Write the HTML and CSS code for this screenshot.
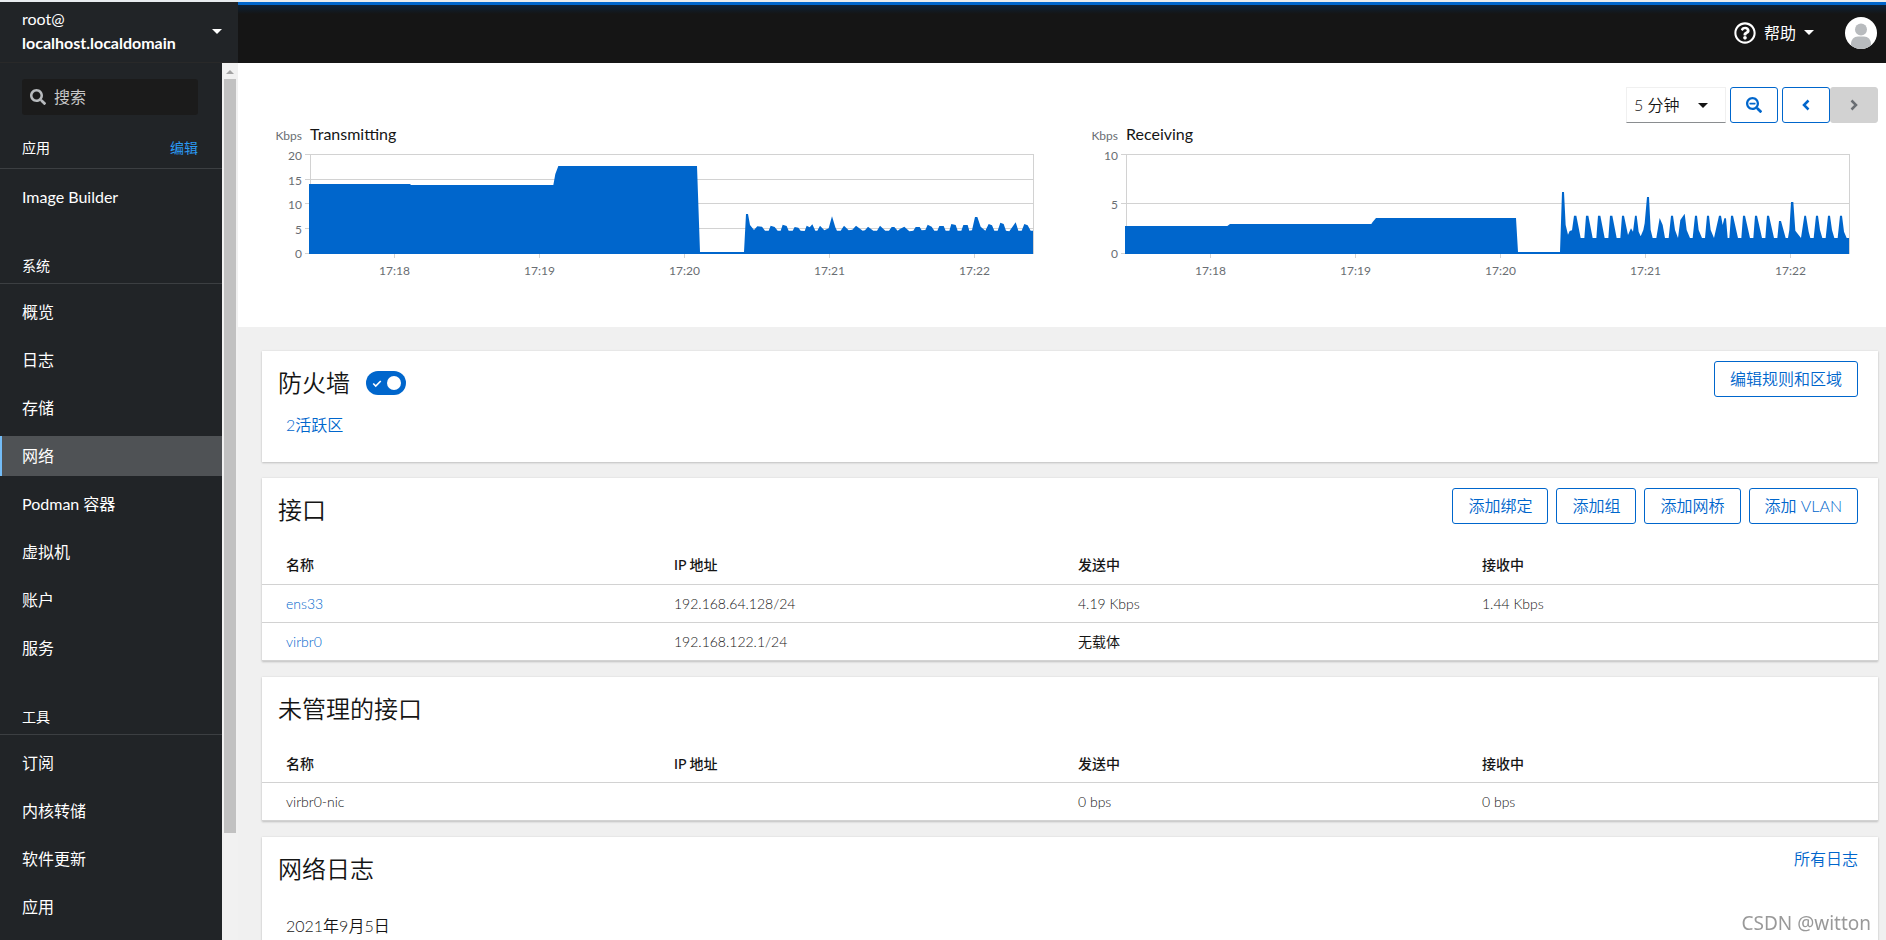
FILE: index.html
```html
<!DOCTYPE html>
<html lang="zh-CN">
<head>
<meta charset="utf-8">
<title>网络 - localhost.localdomain</title>
<link rel="stylesheet" href="styles.css">
</head>
<body>
<div class="shell">
  <button class="host" type="button">
    <span class="host-text"><span>root@</span><strong>localhost.localdomain</strong></span>
    <svg class="caret" viewBox="0 0 10 5" aria-hidden="true"><path d="M0 0h10L5 5z"/></svg>
  </button>
  <header class="topbar">
    <button class="help" type="button">
      <svg class="help-icon" viewBox="0 0 512 512" aria-hidden="true"><path d="M256 8C119 8 8 119 8 256c0 137 111 248 248 248s248-111 248-248C504 119 393 8 256 8zm0 448c-110.500 0-200-89.400-200-200 0-110.500 89.500-200 200-200 110.500 0 200 89.500 200 200 0 110.500-89.400 200-200 200zm107.200-255.200c0 67.100-72.400 68.100-72.400 92.900V300c0 6.600-5.400 12-12 12h-45.600c-6.600 0-12-5.400-12-12v-8.700c0-35.700 27.100-50 47.600-61.500 17.600-9.800 28.300-16.500 28.300-29.500 0-17.200-22-28.700-39.800-28.700-23.200 0-33.900 11-48.900 30-4.100 5.100-11.500 6.100-16.700 2.100l-27.800-21.100c-5.100-3.900-6.300-11.100-2.600-16.400C184.800 131.500 214.900 112 261.800 112c49 0 101.400 38.300 101.400 88.800zM298 368c0 23.200-18.800 42-42 42s-42-18.800-42-42 18.800-42 42-42 42 18.800 42 42z"/></svg>
      <span>帮助</span>
      <svg class="caret" viewBox="0 0 10 5" aria-hidden="true"><path d="M0 0h10L5 5z"/></svg>
    </button>
    <svg class="avatar" viewBox="0 0 32 32" role="img" aria-label="用户"><defs><clipPath id="round"><circle cx="16" cy="16" r="16"/></clipPath></defs><circle cx="16" cy="16" r="16" fill="#fff"/><g fill="#b8bbbe" clip-path="url(#round)"><circle cx="16" cy="12.500" r="6"/><path d="M6 32v-5c0-4.500 3-7.500 7-7.500h6c4 0 7 3 7 7.500v5z"/></g></svg>
  </header>

  <aside class="side">
    <nav class="nav">
      <div class="search">
        <svg viewBox="0 0 512 512" aria-hidden="true"><path d="M505 442.700L405.300 343c-4.500-4.500-10.600-7-17-7H372c27.600-35.300 44-79.700 44-128C416 93.100 322.900 0 208 0S0 93.100 0 208s93.100 208 208 208c48.300 0 92.700-16.400 128-44v16.300c0 6.400 2.500 12.500 7 17l99.700 99.700c9.400 9.400 24.600 9.400 33.900 0l28.300-28.300c9.400-9.400 9.400-24.600.1-34zM208 336c-70.700 0-128-57.200-128-128 0-70.700 57.200-128 128-128 70.700 0 128 57.200 128 128 0 70.700-57.200 128-128 128z"/></svg>
        <input type="search" placeholder="搜索" aria-label="搜索">
      </div>
      <div class="group-head first"><h2>应用</h2><a href="#">编辑</a></div>
      <ul><li><a href="#">Image Builder</a></li></ul>
      <div class="group-head"><h2>系统</h2></div>
      <ul>
        <li><a href="#">概览</a></li>
        <li><a href="#">日志</a></li>
        <li><a href="#">存储</a></li>
        <li><a href="#" class="current" aria-current="page">网络</a></li>
        <li><a href="#">Podman 容器</a></li>
        <li><a href="#">虚拟机</a></li>
        <li><a href="#">账户</a></li>
        <li><a href="#">服务</a></li>
      </ul>
      <div class="group-head"><h2>工具</h2></div>
      <ul>
        <li><a href="#">订阅</a></li>
        <li><a href="#">内核转储</a></li>
        <li><a href="#">软件更新</a></li>
        <li><a href="#">应用</a></li>
      </ul>
    </nav>
    <div class="track" aria-hidden="true"><svg viewBox="0 0 8 4"><path d="M0 4h8L4 0z"/></svg><div class="thumb"></div></div>
  </aside>

  <main class="main">
    <section class="graphs">
      <div class="tools">
        <div class="range">
          <select aria-label="时间范围"><option>5 分钟</option></select>
          <svg class="caret" viewBox="0 0 10 5" aria-hidden="true"><path d="M0 0h10L5 5z"/></svg>
        </div>
        <button class="icon-btn" type="button" aria-label="缩小"><svg viewBox="0 0 512 512" aria-hidden="true"><path d="M304 192v32c0 6.600-5.400 12-12 12H124c-6.600 0-12-5.400-12-12v-32c0-6.600 5.400-12 12-12h168c6.600 0 12 5.400 12 12zm201 284.700L476.700 505c-9.400 9.400-24.600 9.400-33.900 0L343 405.300c-4.500-4.500-7-10.600-7-17V372c-35.300 27.600-79.700 44-128 44C93.100 416 0 322.900 0 208S93.100 0 208 0s208 93.100 208 208c0 48.300-16.400 92.700-44 128h16.300c6.400 0 12.500 2.500 17 7l99.700 99.700c9.300 9.400 9.300 24.600 0 34zM344 208c0-75.200-60.800-136-136-136S72 132.800 72 208s60.800 136 136 136 136-60.800 136-136z"/></svg></button>
        <div class="pair">
          <button class="icon-btn" type="button" aria-label="向前"><svg viewBox="0 0 16 16" aria-hidden="true"><path class="stroke" d="M10.500 3.500 6 8l4.500 4.500"/></svg></button><button class="icon-btn" type="button" aria-label="向后" disabled><svg viewBox="0 0 16 16" aria-hidden="true"><path class="stroke" d="M5.500 3.500 10 8l-4.500 4.500"/></svg></button>
        </div>
      </div>
      <div class="charts">
        <figure class="chart">
          <figcaption><span class="unit">Kbps</span><h3>Transmitting</h3></figcaption>
          <div class="plot">
            <div class="ylabels"><span>20</span><span>15</span><span>10</span><span>5</span><span>0</span></div>
            <svg class="canvas" viewBox="0 0 2172 300" preserveAspectRatio="none" role="img" aria-label="Transmitting">
              <path class="grid" d="M-15 1.500H2169V300M-15 76.500H2169M-15 148.500H2169M-15 223.500H2169M-15 298.500H0M1.500 1.500V300"/>
              <polygon class="area" points="-3,300 -3,90 300,90 303,93 730,93 736,60 745,36 1161,36 1170,294 1302,294 1308,180 1314,180 1320,213 1332,228 1342,217 1356,218 1365,230 1376,230 1382,215 1394,219 1403,230 1412,230 1418,212 1430,216 1436,230 1448,230 1454,219 1465,221 1472,230 1484,231 1490,215 1499,220 1507,211 1516,230 1522,230 1530,215 1543,229 1556,223 1566,187 1576,220 1581,230 1592,230 1602,215 1616,229 1627,227 1638,215 1658,230 1665,229 1674,218 1690,230 1701,230 1710,215 1726,230 1737,230 1745,219 1753,219 1763,230 1771,224 1783,218 1798,232 1810,230 1817,219 1829,219 1835,229 1846,228 1853,212 1865,218 1873,230 1882,230 1888,216 1901,216 1907,230 1918,230 1924,210 1937,213 1943,230 1954,230 1960,213 1973,213 1978,230 1986,229 1995,189 2002,189 2012,218 2026,230 2036,210 2046,214 2053,230 2063,230 2071,206 2081,210 2088,230 2098,232 2117,205 2125,230 2135,230 2143,210 2153,214 2162,230 2169,230 2169,300"/>
            </svg>
          </div>
          <div class="xlabels"><span>17:18</span><span>17:19</span><span>17:20</span><span>17:21</span><span>17:22</span></div>
        </figure>
        <figure class="chart">
          <figcaption><span class="unit">Kbps</span><h3>Receiving</h3></figcaption>
          <div class="plot">
            <div class="ylabels"><span>10</span><span>5</span><span>0</span></div>
            <svg class="canvas" viewBox="0 0 2172 300" preserveAspectRatio="none" role="img" aria-label="Receiving">
              <path class="grid" d="M-15 1.500H2169V300M-15 148.500H2169M-15 298.500H0M1.500 1.500V300"/>
              <g transform="translate(1062 -132)"><polygon class="area" points="-1065,432 -1065,348 -758,348 -750,342 -326,342 -322,336 -312,324 108,324 114,426 240,426 246,246 252,246 257,345 264,374 269,363 276,361 282,317 289,317 302,384 313,384 318,317 325,317 338,384 349,384 354,317 361,317 374,384 385,384 390,317 397,317 410,384 421,384 426,317 432,317 444,375 453,355 459,365 465,317 470,317 476,365 482,379 490,360 494,340 501,261 507,261 512,360 518,384 529,384 539,324 548,345 555,384 566,384 573,317 579,317 585,360 594,384 601,330 614,311 620,360 630,384 638,384 645,317 651,317 656,360 666,384 675,384 681,317 687,317 692,360 702,384 717,317 723,317 728,345 733,325 738,325 743,384 748,384 753,317 759,317 774,384 784,384 789,317 795,317 810,384 820,384 825,317 831,317 846,384 856,384 861,317 867,317 882,384 892,384 897,333 903,333 917,384 924,384 928,360 933,276 940,276 946,362 963,384 973,317 978,317 986,365 991,384 1001,384 1008,317 1014,317 1020,360 1027,384 1037,384 1044,317 1050,317 1056,360 1063,384 1073,384 1080,317 1086,317 1092,365 1100,384 1107,384 1107,432"/></g>
            </svg>
          </div>
          <div class="xlabels"><span>17:18</span><span>17:19</span><span>17:20</span><span>17:21</span><span>17:22</span></div>
        </figure>
      </div>
    </section>

    <div class="cards">
      <section class="card firewall">
        <div class="card-head">
          <h2>防火墙</h2>
          <label class="switch"><input type="checkbox" checked aria-label="防火墙"><span class="slider"><svg viewBox="0 0 12 10" aria-hidden="true"><path d="M1.500 5 4.500 8 10.500 2"/></svg></span></label>
          <div class="actions"><button class="btn" type="button">编辑规则和区域</button></div>
        </div>
        <p class="body"><a href="#">2活跃区</a></p>
      </section>

      <section class="card">
        <div class="card-head">
          <h2>接口</h2>
          <div class="actions">
            <button class="btn" type="button">添加绑定</button>
            <button class="btn" type="button">添加组</button>
            <button class="btn" type="button">添加网桥</button>
            <button class="btn" type="button">添加 VLAN</button>
          </div>
        </div>
        <table>
          <thead><tr><th scope="col">名称</th><th scope="col">IP 地址</th><th scope="col">发送中</th><th scope="col">接收中</th></tr></thead>
          <tbody>
            <tr><td><a href="#">ens33</a></td><td>192.168.64.128/24</td><td>4.19 Kbps</td><td>1.44 Kbps</td></tr>
            <tr><td><a href="#">virbr0</a></td><td>192.168.122.1/24</td><td class="zh">无载体</td><td></td></tr>
          </tbody>
        </table>
      </section>

      <section class="card">
        <div class="card-head"><h2>未管理的接口</h2></div>
        <table>
          <thead><tr><th scope="col">名称</th><th scope="col">IP 地址</th><th scope="col">发送中</th><th scope="col">接收中</th></tr></thead>
          <tbody><tr><td>virbr0-nic</td><td></td><td>0 bps</td><td>0 bps</td></tr></tbody>
        </table>
      </section>

      <section class="card logs">
        <div class="card-head"><h2>网络日志</h2><div class="actions"><a href="#">所有日志</a></div></div>
        <p class="date">2021年9月5日</p>
      </section>
    </div>
  </main>
</div>
<div class="watermark">CSDN @witton</div>
</body>
</html>
```

FILE: styles.css
```css
* { box-sizing: border-box; }

body {
  margin: 0;
  border-top: 2px solid #e8ecef;
  font: 350 16px/24px Lato, "Noto Sans CJK SC", sans-serif;
  color: #151515;
  background: #f0f0f0;
}

h2, h3, p, ul, figure { margin: 0; padding: 0; }
ul { list-style: none; }
a { color: #06c; text-decoration: none; }
button, input, select { font: inherit; color: inherit; }

.shell {
  display: grid;
  grid-template-columns: 238px minmax(0, 1fr);
  grid-template-rows: auto minmax(0, 1fr);
  height: calc(100vh - 2px);
  overflow: hidden;
}

.caret { width: 10px; height: 5px; fill: currentColor; }

/* Top bar */
.host {
  display: flex;
  align-items: center;
  justify-content: space-between;
  padding: 5px 16px 7px 22px;
  border: 0;
  border-bottom: 1px solid #292929;
  background: #212427;
  color: #fff;
  font-weight: 400;
  text-align: left;
}
.host-text { display: flex; flex-direction: column; }
.host strong { font-weight: 700; }

.topbar {
  display: flex;
  align-items: center;
  justify-content: flex-end;
  gap: 31px;
  padding: 0 9px 3px 0;
  border-top: 3px solid #06c;
  background: linear-gradient(#0c2238, #151515 9px);
  color: #fff;
}
.help {
  display: flex;
  align-items: center;
  gap: 8px;
  padding: 0;
  border: 0;
  background: none;
  font-weight: 400;
}
.help-icon { width: 22px; height: 22px; fill: #fff; }
.avatar { width: 32px; height: 32px; }

/* Sidebar */
.side { display: flex; overflow: hidden; background: #212427; color: #fff; }
.nav { flex: 1; padding-top: 16px; font-weight: 400; }
.search {
  display: flex;
  align-items: center;
  gap: 8px;
  height: 36px;
  margin: 0 24px 0 22px;
  padding: 0 8px;
  border-radius: 3px;
  background: #1b1b1b;
}
.search svg { flex: none; width: 16px; height: 16px; fill: #b8bbbe; }
.search input {
  min-width: 0;
  width: 100%;
  padding: 0;
  border: 0;
  outline: 0;
  background: none;
}
.search input::placeholder { color: #c8c8c8; opacity: 1; }
.group-head {
  display: flex;
  justify-content: space-between;
  margin-bottom: 8px;
  padding: 38px 24px 7px 22px;
  border-bottom: 1px solid #3c3f42;
  font-size: 14px;
  line-height: 21px;
}
.group-head.first { padding-top: 22px; padding-bottom: 10px; }
.group-head h2 { font-size: 14px; font-weight: 400; }
.group-head a { color: #2b9af3; }
.nav li + li { margin-top: 8px; }
.nav li a {
  display: block;
  padding: 8px 22px;
  color: #fff;
}
.nav li .current {
  padding-left: 20px;
  border-left: 2px solid #73bcf7;
  background: #4f5255;
}
.track {
  display: flex;
  flex-direction: column;
  align-items: center;
  width: 16px;
  background: #f1f1f1;
}
.track svg { width: 8px; height: 4px; margin: 7px 0 5px; fill: #a3a3a3; }
.thumb { width: 12px; height: 86%; background: #c1c1c1; }

/* Graphs */
.main { min-width: 0; }
.graphs { padding: 24px 0 48px; background: #fff; }
.tools { display: flex; gap: 4px; justify-content: flex-end; padding-right: 8px; }
.pair { display: flex; }
.range { position: relative; width: 100px; }
.range select {
  width: 100%;
  height: 36px;
  padding: 0 7px;
  border: 1px solid #f0f0f0;
  border-bottom-color: #8a8d90;
  background: #fff;
  appearance: none;
}
.range .caret { position: absolute; right: 18px; top: 16px; pointer-events: none; }
.icon-btn {
  display: grid;
  place-items: center;
  width: 48px;
  height: 36px;
  padding: 0;
  border: 1px solid #06c;
  border-radius: 3px;
  background: #fff;
  color: #06c;
}
.icon-btn:disabled { border-color: #d2d2d2; background: #d2d2d2; color: #6a6e73; }
.icon-btn svg { width: 16px; height: 16px; fill: currentColor; }
.icon-btn .stroke { fill: none; stroke: currentColor; stroke-width: 2.5; }

.charts { display: grid; grid-template-columns: 1fr 1fr; padding-left: 16px; }
.chart { padding: 0 36px 0 56px; }
.chart figcaption { display: flex; align-items: baseline; height: 22px; }
.chart h3 { font-size: 16px; font-weight: 400; line-height: 22px; }
.unit { width: 48px; margin: 0 8px 0 -56px; line-height: 16px; text-align: right; }
.unit, .ylabels, .xlabels { font-size: 12px; font-weight: 400; color: #6a6e73; }
.plot { display: flex; margin-top: 9px; height: 100px; }
.ylabels {
  display: flex;
  flex-direction: column;
  justify-content: space-between;
  width: 48px;
  margin: -6px 8px -8px -56px;
  line-height: 16px;
  text-align: right;
}
.canvas { flex: 1; min-width: 0; height: 100px; overflow: visible; }
.grid {
  fill: none;
  stroke: #d2d2d2;
  stroke-width: 1px;
  vector-effect: non-scaling-stroke;
  shape-rendering: crispEdges;
}
.area { fill: #06c; }
.xlabels { display: flex; justify-content: space-between; padding: 0 43px 0 68px; line-height: 16px; }
.xlabels span { width: 33px; text-align: center; }
.xlabels span::before {
  content: "";
  display: block;
  width: 1px;
  height: 4px;
  margin: 0 auto 5px;
  background: #d2d2d2;
}

/* Cards */
.cards { display: flex; flex-direction: column; gap: 16px; padding: 24px 8px 0 24px; }
.card { background: #fff; box-shadow: 0 1px 2px rgba(3, 3, 3, .18), 0 0 2px rgba(3, 3, 3, .08); }
.card-head { display: flex; align-items: flex-start; padding: 10px 20px 0 16px; }
.card-head h2 { padding: 4px 0; font-size: 24px; font-weight: 350; line-height: 36px; }
.actions { display: flex; gap: 8px; margin-left: auto; }
.btn {
  height: 36px;
  padding: 0 15px;
  border: 1px solid #06c;
  border-radius: 3px;
  background: #fff;
  color: #06c;
}
.switch { display: block; margin: 10px 0 0 16px; }
.switch input { position: absolute; opacity: 0; }
.slider {
  display: flex;
  align-items: center;
  justify-content: space-between;
  width: 40px;
  height: 24px;
  padding: 0 5px 0 6px;
  border-radius: 12px;
  background: #06c;
}
.slider svg { width: 10px; height: 9px; fill: none; stroke: #fff; stroke-width: 2; }
.slider::after { content: ""; width: 14px; height: 14px; border-radius: 50%; background: #fff; }
.body { padding: 8px 24px 25px; }

table { width: 100%; margin-top: 14px; border-collapse: collapse; table-layout: fixed; font-size: 14px; line-height: 21px; }
th, td { height: 38px; padding: 8px; border-bottom: 1px solid #d2d2d2; text-align: left; }
th { font-weight: 500; }
td.zh { font-weight: 400; }
th:first-child, td:first-child { padding-left: 24px; }

.date { padding: 23px 24px; }

.watermark {
  position: fixed;
  right: 15px;
  bottom: 3px;
  font: 400 19px/28px "Noto Sans", sans-serif;
  color: #999;
}
```
